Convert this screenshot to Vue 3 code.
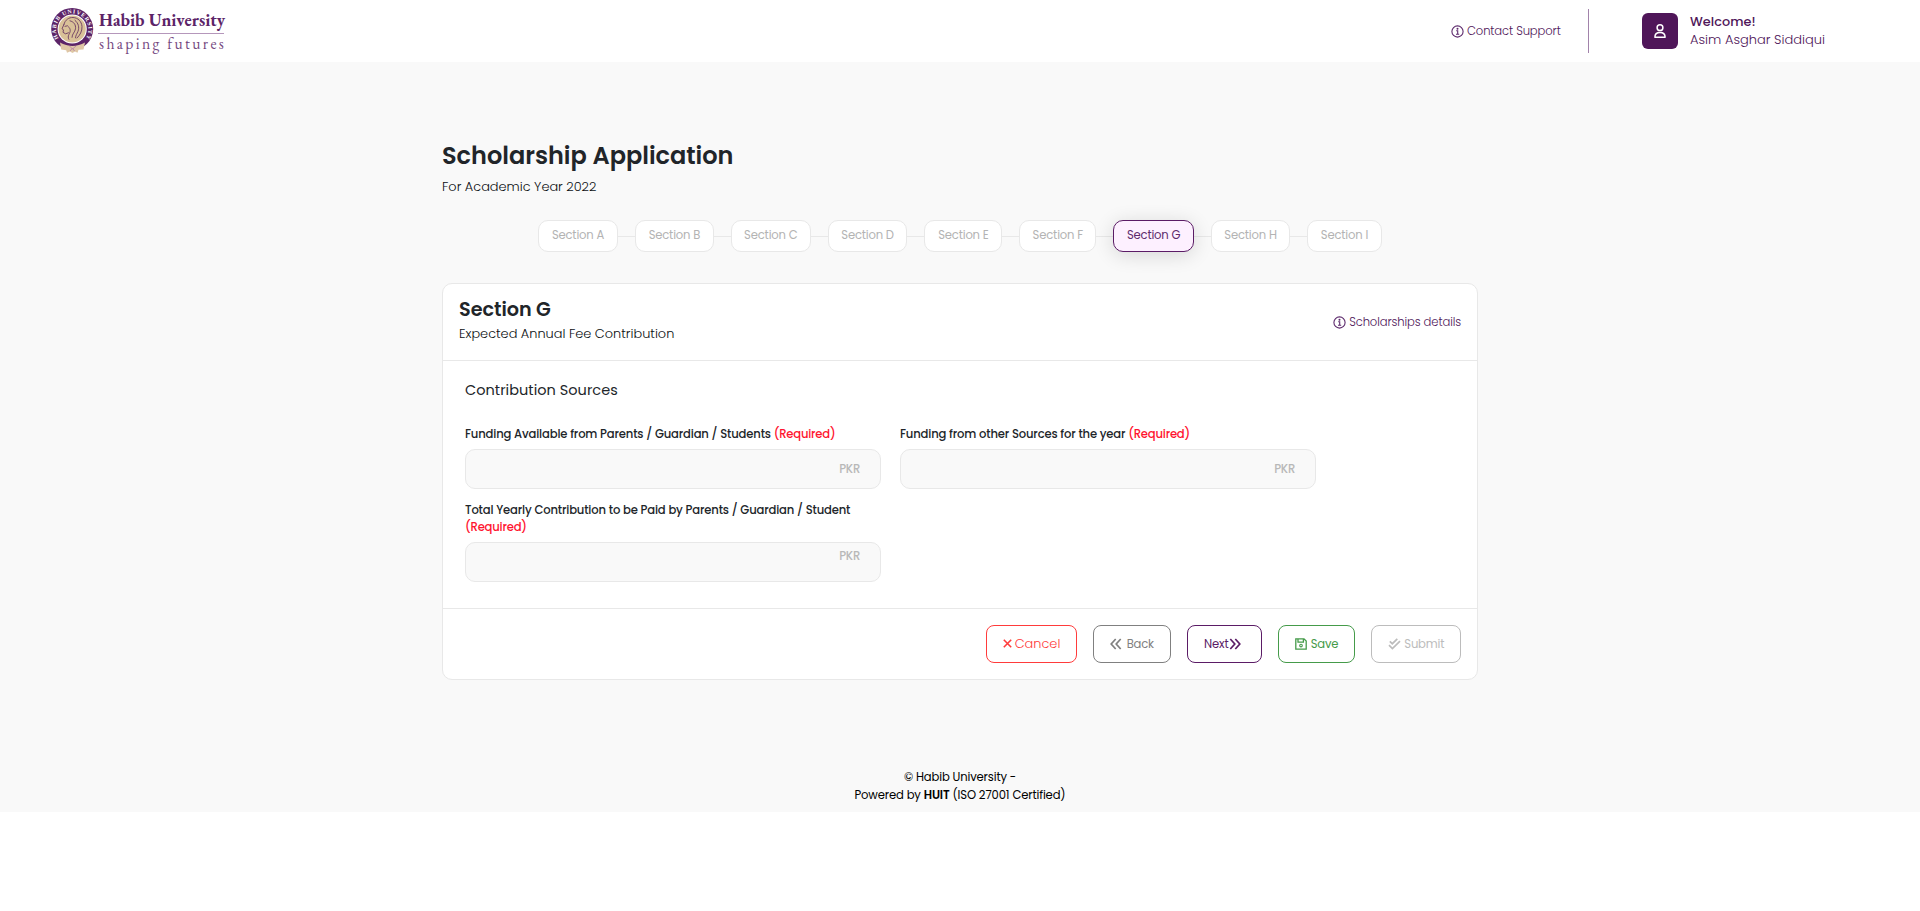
<script setup>
const steps = [
  { name: 'Section A', width: 80 },
  { name: 'Section B', width: 79 },
  { name: 'Section C', width: 80 },
  { name: 'Section D', width: 79.800 },
  { name: 'Section E', width: 78 },
  { name: 'Section F', width: 77 },
  { name: 'Section G', width: 81, active: true },
  { name: 'Section H', width: 79 },
  { name: 'Section I', width: 75 },
]

const fields = [
  { label: 'Funding Available from Parents / Guardian / Students', kind: 'parents' },
  { label: 'Funding from other Sources for the year', kind: 'other' },
  { label: 'Total Yearly Contribution to be Paid by Parents / Guardian / Student', kind: 'total' },
]
</script>

<template>
  <div class="page">
    <header class="topbar">
      <a class="brand">
        <svg class="crest" width="46" height="50" viewBox="0 0 46 50">
          <defs>
            <path id="crest-arc" d="M8.600 32.400 A16.200 16.200 0 1 1 35.800 32.400" />
          </defs>
          <circle cx="22.200" cy="23" r="21" fill="#5c2468" />
          <circle cx="22.200" cy="23" r="14.600" fill="#fff" />
          <circle cx="22.200" cy="23" r="13.600" fill="#d9c198" />
          <text class="crest-text" textLength="69" lengthAdjust="spacing">
            <textPath href="#crest-arc">HABIB UNIVERSITY</textPath>
          </text>
          <g fill="none" stroke="#6b3a62" stroke-width=".9" stroke-linecap="round" transform="translate(0 .8)">
            <path d="M14 17.500c1-4.500 5-7 9-6.800 5 .2 8.600 4 9 9 .2 5-2 8.500-5 11.500" />
            <path d="M14 17.500l-2 4.500 1.500 1-.5 2.500 2.500 1.500 3-1M15 19.500l2.500-.5" />
            <path d="M20 14c4 1 6 4 5.500 8-.5 3.500-3.500 5-3.500 8.500M25 13.500c3.500 3 4.500 7 3 11-1 2.500-2.500 4-2.500 6.500M18.500 20c2.500 2 2 5 .5 7.500-1 2-1 3.500-.2 5" />
          </g>
          <path d="M10 36.500c8 4.500 17 4.500 25 0l-1.500 7-5 .3-1 2.900-2.500-1.200-2.500 1.500-2.500-1.500-3 1.300-.8-2.500-5-.8z" fill="#dfc7a6" />
          <path d="M19 39.500l3.500 3.500 3.500-3M20 45l2.500-3 2 3" fill="none" stroke="#b986a4" stroke-width=".9" />
        </svg>
        <span class="brand-text">
          <span class="brand-name">Habib University</span>
          <span class="brand-tag">shaping futures</span>
        </span>
      </a>

      <div class="top-actions">
        <a class="link support">
          <svg width="13" height="13" viewBox="0 0 13 13" class="info">
            <circle cx="6.500" cy="6.500" r="5.600" />
            <path d="M5.200 5.700h1.500v3.600M5 9.300h3.200" />
            <circle cx="6.500" cy="3.700" r=".45" class="dot" />
          </svg>
          <span>Contact Support</span>
        </a>
        <span class="divider"></span>
        <div class="user">
          <span class="avatar">
            <svg width="14" height="16" viewBox="0 0 14 16" fill="none" stroke="#fff" stroke-width="1.500">
              <circle cx="7" cy="4.700" r="2.900" />
              <path d="M1.900 14.200c0-3 1.800-4.700 5.100-4.700s5.100 1.700 5.100 4.700z" stroke-linejoin="round" />
            </svg>
          </span>
          <div class="user-text">
            <div class="welcome">Welcome!</div>
            <div class="user-name">Asim Asghar Siddiqui</div>
          </div>
        </div>
      </div>
    </header>

    <main class="content">
      <h1>Scholarship Application</h1>
      <p class="year">For Academic Year 2022</p>

      <nav class="steps">
        <span
          v-for="s in steps"
          :key="s.name"
          class="step"
          :class="{ active: s.active }"
          :style="{ width: s.width + 'px' }"
        >{{ s.name }}</span>
      </nav>

      <section class="card">
        <div class="card-head">
          <div>
            <h2>Section G</h2>
            <p class="lead">Expected Annual Fee Contribution</p>
          </div>
          <a class="link details">
            <svg width="13" height="13" viewBox="0 0 13 13" class="info">
              <circle cx="6.500" cy="6.500" r="5.600" />
              <path d="M5.200 5.700h1.500v3.600M5 9.300h3.200" />
              <circle cx="6.500" cy="3.700" r=".45" class="dot" />
            </svg>
            <span>Scholarships details</span>
          </a>
        </div>

        <div class="card-body">
          <h3>Contribution Sources</h3>
          <div class="fields">
            <div v-for="f in fields" :key="f.kind" class="field" :class="f.kind">
              <label>{{ f.label }} <span class="required">(Required)</span></label>
              <div class="input"><span class="unit">PKR</span></div>
            </div>
          </div>
        </div>

        <div class="card-foot">
          <button class="btn cancel">
            <svg width="9" height="9" viewBox="0 0 9 9"><path d="M.8.800l7.400 7.400M8.200.800L.8 8.200" stroke-width="1.600" /></svg>
            <span>Cancel</span>
          </button>
          <button class="btn back">
            <svg width="12" height="12" viewBox="0 0 12 12"><path d="M5.700 1L1.200 6l4.500 5M10.700 1L6.200 6l4.500 5" stroke-width="1.700" /></svg>
            <span>Back</span>
          </button>
          <button class="btn next">
            <span>Next</span>
            <svg width="12" height="12" viewBox="0 0 12 12"><path d="M1.300 1l4.500 5-4.500 5M6.300 1l4.500 5-4.500 5" stroke-width="1.700" /></svg>
          </button>
          <button class="btn save">
            <svg width="12" height="12" viewBox="0 0 12 12">
              <path d="M.8.800h8.200l2.200 2.200v8.200H.8zM3 .8v3.400h5.400V.8" stroke-width="1.300" />
              <circle cx="6" cy="7.600" r="1.300" stroke-width="1.100" />
            </svg>
            <span>Save</span>
          </button>
          <button class="btn submit">
            <svg width="13" height="12" viewBox="0 0 13 12"><path d="M1.800 3.300l2.500 2.400L9.300.9M1 7.200l3.400 3.300 7.600-7.300" stroke-width="1.700" /></svg>
            <span>Submit</span>
          </button>
        </div>
      </section>
    </main>

    <footer class="footer">
      <div>© Habib University -</div>
      <div>Powered by <b>HUIT</b> (ISO 27001 Certified)</div>
    </footer>
  </div>
</template>

<style scoped>
.page {
  height: 812px;
  background: #f9f9f9;
  color: #212529;
  font-family: Poppins, Inter, sans-serif;
  font-size: 11.600px;
  overflow: hidden;
}
h1, h2, h3, p { margin: 0; }

.topbar {
  height: 62px;
  background: #fff;
  display: flex;
  justify-content: space-between;
  box-sizing: border-box;
  padding: 0 95px 0 50px;
}
.brand { display: flex; padding-top: 6px; height: 50px; }
.crest { display: block; }
.crest-text { font: 700 5.8px "Liberation Serif", serif; fill: #fff; }
.brand-text {
  display: flex;
  flex-direction: column;
  margin-left: 2px;
  width: 126px;
  color: #5c2468;
  font-family: "EB Garamond", "Liberation Serif", serif;
  white-space: nowrap;
}
.brand-name {
  font-size: 17.400px;
  font-weight: 700;
  line-height: 20px;
  padding: 4px 0 3px 1px;
  border-bottom: 1px solid #b597bb;
}
.brand-tag {
  font-size: 15.600px;
  line-height: 18px;
  padding: 1px 0 0 1px;
  letter-spacing: 2.350px;
  color: #75487f;
}

.top-actions { display: flex; align-items: center; }
.link { display: flex; align-items: center; font-weight: 300; letter-spacing: -0.12px; color: #4f1659; white-space: nowrap; }
.info { display: block; flex: none; fill: none; stroke: #5e2b6d; stroke-width: 1.1; position: relative; top: 0.5px; }
.info .dot { fill: #5e2b6d; }
.support { width: 109px; gap: 3px; margin-right: 28px; }
.divider { width: 1px; height: 44px; background: #a283ab; margin-right: 53px; }
.user { display: flex; align-items: center; width: 183px; gap: 12px; }
.avatar {
  flex: none;
  width: 36px;
  height: 36px;
  border-radius: 6px;
  background: #4f1659;
  display: flex;
  align-items: center;
  justify-content: center;
}
.user-text { font-size: 12.800px; line-height: 18px; color: #4f1659; white-space: nowrap; }
.welcome { font-weight: 500; letter-spacing: 0.05px; }
.user-name { font-size: 13px; font-weight: 300; }

.content { width: 1036px; margin: 0 auto; padding-top: 76px; }
h1 { font-size: 24px; line-height: 36px; font-weight: 600; }
.year { font-size: 12.900px; line-height: 20px; margin-top: 3px; font-weight: 300; color: #0c0f12; }

.steps {
  position: relative;
  display: flex;
  justify-content: space-between;
  width: 844px;
  margin: 23px auto 31px;
}
.steps::before {
  content: "";
  position: absolute;
  left: 10px;
  right: 10px;
  top: 16px;
  height: 1px;
  background: #e8e8e8;
}
.step {
  position: relative;
  box-sizing: border-box;
  height: 32px;
  border: 1px solid #e8e8e8;
  border-radius: 10px;
  background: #fff;
  color: #b3b3b3;
  text-align: center;
  line-height: 29px;
  letter-spacing: -0.18px;
}
.step.active {
  background: #fdf0ff;
  border-color: #5b1c66;
  color: #5e2b6d;
  box-shadow: 0 3px 20px rgba(0, 0, 0, 0.14);
}

.card {
  box-sizing: border-box;
  height: 397px;
  background: #fff;
  border: 1px solid #e8e8e8;
  border-radius: 10px;
}
.card-head {
  height: 76px;
  border-bottom: 1px solid #e8e8e8;
  display: flex;
  justify-content: space-between;
  align-items: center;
  padding: 0 16px;
}
.card-head > div { align-self: flex-start; padding-top: 12px; }
h2 { font-size: 19.200px; line-height: 28px; font-weight: 600; letter-spacing: -0.03px; }
.lead { font-size: 12.900px; line-height: 20px; font-weight: 300; color: #0c0f12; }
.details { gap: 3px; }

.card-body { height: 247px; box-sizing: border-box; padding: 18px 22px 0; }
h3 { font-size: 14.500px; line-height: 22px; font-weight: 400; letter-spacing: 0.03px; margin-bottom: 24px; }
.fields { display: grid; grid-template-columns: 416px 416px; gap: 12px 19px; }
label { display: block; position: relative; top: 0.5px; line-height: 17px; font-weight: 500; letter-spacing: -0.16px; margin-bottom: 7px; }
.required { color: #ff1430; letter-spacing: -0.2px; }
.input {
  box-sizing: border-box;
  height: 40px;
  border: 1px solid #e8e8e8;
  border-radius: 10px;
  background: #f9f9f9;
  display: flex;
  justify-content: flex-end;
  align-items: center;
  padding-right: 20px;
}
.unit { color: #b8b8b8; font-weight: 500; line-height: 18px; letter-spacing: -0.25px; }
.total .input { align-items: flex-start; padding-top: 4px; }

.card-foot {
  height: 71px;
  box-sizing: border-box;
  border-top: 1px solid #e8e8e8;
  display: flex;
  justify-content: flex-end;
  gap: 16px;
  padding: 16px 16px 0;
}
.btn {
  box-sizing: border-box;
  height: 38px;
  border: 1px solid currentColor;
  border-radius: 8px;
  background: #fff;
  padding: 0;
  font-family: inherit;
  font-size: 11.600px;
  letter-spacing: -0.18px;
  display: flex;
  align-items: center;
  justify-content: center;
  white-space: nowrap;
}
.btn svg { display: block; fill: none; stroke: currentColor; flex: none; position: relative; top: -0.5px; }
.cancel { width: 91px; color: #ff3b3b; font-size: 12.900px; font-weight: 300; letter-spacing: 0; gap: 3px; }
.back { width: 78px; color: #808080; gap: 4.500px; }
.next { width: 75px; color: #5b1c66; gap: 0.5px; padding-right: 4px; }
.save { width: 77px; color: #459b4a; gap: 4px; }
.submit { width: 90px; color: #bcbcbc; gap: 3.500px; }

.footer { margin-top: 88px; text-align: center; line-height: 18px; letter-spacing: -0.14px; color: #000; }
.footer b { font-weight: 600; }
</style>

<style>
body { background: #fff; }
</style>
